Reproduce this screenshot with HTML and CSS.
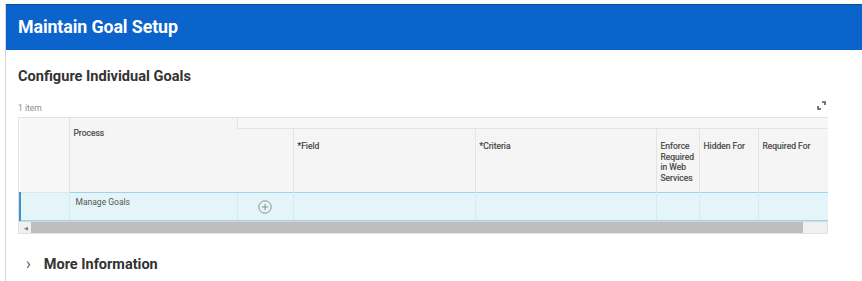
FILE: index.html
```html
<!doctype html>
<html lang="en">
<head>
<meta charset="utf-8">
<title>Maintain Goal Setup</title>
<link rel="stylesheet" href="styles.css">
</head>
<body>

<div id="page">
  <div class="titlebar">
    <h1>Maintain Goal Setup</h1>
  </div>

  <div class="content">
    <h2>Configure Individual Goals</h2>

    <div class="grid-top">
      <span class="count">1 item</span>
      <svg class="expand" width="9" height="9" viewBox="0 0 9 9">
        <path d="M5 1h3v3" fill="none" stroke="#555" stroke-width="1.6"/>
        <path d="M1 5v3h3" fill="none" stroke="#555" stroke-width="1.6"/>
      </svg>
    </div>

    <div class="grid">
      <table>
        <colgroup>
          <col style="width: 49px">
          <col style="width: 168px">
          <col style="width: 56px">
          <col style="width: 182px">
          <col style="width: 181px">
          <col style="width: 43px">
          <col style="width: 59px">
          <col style="width: 70px">
        </colgroup>
        <thead>
          <tr class="group">
            <th rowspan="2"></th>
            <th rowspan="2" class="process">Process</th>
            <th colspan="6"></th>
          </tr>
          <tr class="cols">
            <th></th>
            <th>*Field</th>
            <th>*Criteria</th>
            <th>Enforce Required in Web Services</th>
            <th>Hidden For</th>
            <th>Required For</th>
          </tr>
        </thead>
        <tbody>
          <tr class="selected">
            <td class="marker"></td>
            <td class="name">Manage Goals</td>
            <td class="add">
              <svg width="14" height="14" viewBox="0 0 14 14">
                <circle cx="7" cy="7" r="6.2" fill="none" stroke="#8a8f94" stroke-width="1"/>
                <path d="M7 3.8v6.4M3.8 7h6.4" stroke="#8a8f94" stroke-width="1"/>
              </svg>
            </td>
            <td></td>
            <td></td>
            <td></td>
            <td></td>
            <td></td>
          </tr>
        </tbody>
      </table>
      <div class="scrollbar">
        <span class="arrow">&#9664;</span>
        <div class="thumb"></div>
      </div>
    </div>

    <div class="more">
      <span class="chevron">&#8250;</span>
      <span>More Information</span>
    </div>
  </div>
</div>

</body>
</html>
```

FILE: styles.css
```css
body {
  margin: 0;
  background: #ffffff;
  font-family: Roboto, "Liberation Sans", sans-serif;
  color: #333333;
}

#page {
  margin: 4px 0 0 5px;
  border-left: 1px solid #d6d6d6;
  height: 277px;
}

#page .titlebar {
  background-color: #0b63cc;
  border-top: 1px solid #0a4f9e;
  height: 45px;
  display: flex;
  align-items: center;
  padding-left: 12px;
}

#page .titlebar h1 {
  margin: 0 0 3px;
  color: #ffffff;
  font-size: 17.8px;
  font-weight: 700;
  letter-spacing: -0.1px;
}

#page .content {
  padding: 0 0 0 12px;
}

#page .content h2 {
  margin: 0;
  padding-top: 17px;
  font-size: 14.6px;
  font-weight: 700;
  color: #333333;
  height: 25px;
}

#page .grid-top {
  display: flex;
  justify-content: space-between;
  align-items: center;
  width: 808px;
  height: 25px;
}

#page .grid-top .count {
  font-size: 8.5px;
  color: #8c8c8c;
  margin-top: 6px;
}

#page .grid-top .expand {
  margin-top: 1px;
}

#page .grid {
  width: 810px;
  border: 1px solid #e2e2e2;
  box-sizing: border-box;
}

#page .grid table {
  border-collapse: collapse;
  table-layout: fixed;
  width: 808px;
}

#page .grid th {
  background: #f5f5f5;
  border-left: 1px solid #e4e4e4;
  font-size: 8.5px;
  font-weight: 400;
  color: #444444;
  text-align: left;
  vertical-align: top;
  padding: 0 4px;
  line-height: 10.5px;
  -webkit-text-stroke: 0.2px #444444;
}

#page .grid th:first-child {
  border-left: none;
}

#page .grid tr.group th {
  height: 10px;
  padding: 0;
  background: #f7f7f7;
  border-bottom: 1px solid #e4e4e4;
}

#page .grid tr.group th.process {
  padding: 10px 4px 0;
  height: auto;
  background: #f5f5f5;
  border-bottom: none;
}

#page .grid tr.cols th {
  height: 64px;
  padding-top: 12px;
  box-sizing: border-box;
}

#page .grid tbody tr.selected td {
  background: #e4f5f9;
  border-top: 1px solid #9fd3e8;
  border-bottom: 1px solid #9fd3e8;
  border-left: 1px solid #d3eaf1;
  height: 28px;
  box-sizing: border-box;
  padding: 0 4px;
  font-size: 8.5px;
  color: #555555;
  vertical-align: top;
}

#page .grid tbody tr.selected td.marker {
  border-left: 2px solid #3f93d3;
}

#page .grid tbody tr.selected td.name {
  padding: 4px 6px 0;
}

#page .grid tbody tr.selected td.add {
  text-align: center;
  vertical-align: middle;
  padding: 3px 0 0;
}

#page .scrollbar {
  display: flex;
  align-items: center;
  height: 11px;
  background: #f0f0f0;
  border-top: 1px solid #d8d8d8;
}

#page .scrollbar .arrow {
  font-size: 5px;
  color: #777777;
  width: 10px;
  text-align: center;
  padding-left: 2px;
}

#page .scrollbar .thumb {
  height: 11px;
  width: 772px;
  background: #bdbdbd;
}

#page .more {
  display: flex;
  align-items: center;
  gap: 13px;
  margin-top: 22px;
  padding-left: 8px;
  font-size: 14.5px;
  font-weight: 700;
  color: #333333;
}

#page .more .chevron {
  font-size: 16px;
  font-weight: 400;
  color: #555555;
  margin-top: -3px;
}
```
